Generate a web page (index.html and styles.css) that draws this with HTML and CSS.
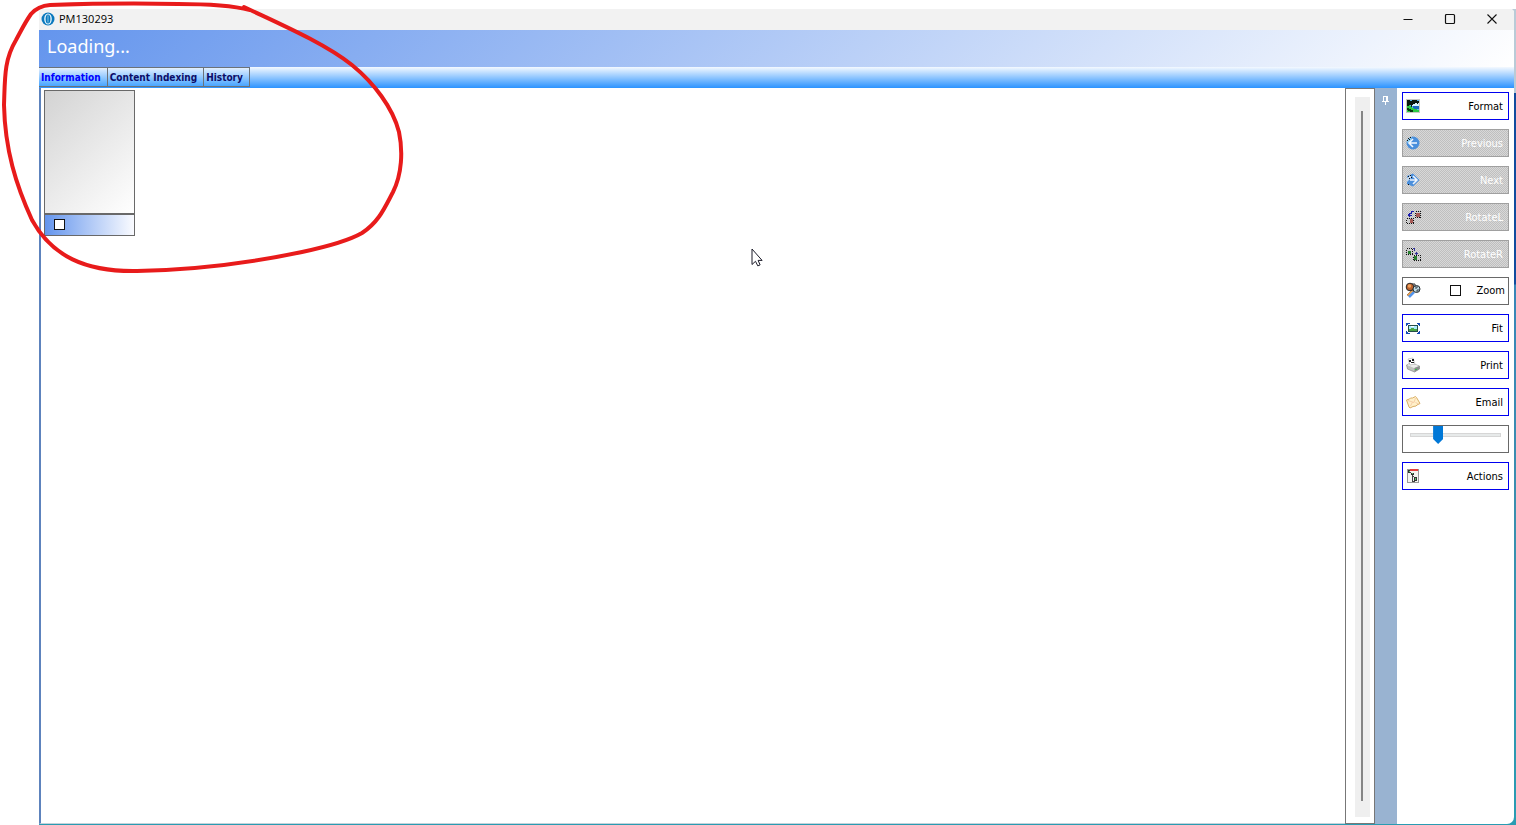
FILE: index.html
```
<!DOCTYPE html>
<html lang="en">
<head>
<meta charset="utf-8">
<title>PM130293</title>
<link rel="stylesheet" href="styles.css">
</head>
<body>
<div class="desktop">
<div class="window">
  <header class="titlebar">
    <svg class="app-icon" viewBox="0 0 14 14"><circle cx="7" cy="7" r="6.500" fill="#0a78bd"/><ellipse cx="7" cy="7" rx="3.800" ry="5.500" fill="#e6f6fd"/><ellipse cx="7" cy="7" rx="2.400" ry="4.600" fill="#0a78bd"/><path d="M7 3.400v7.200" stroke="#7cc4e6" stroke-width="1"/></svg>
    <span class="title">PM130293</span>
    <div class="window-buttons">
      <button aria-label="Minimize"><svg viewBox="0 0 12 12"><path d="M1.500 6.500h9" stroke="#111"/></svg></button>
      <button aria-label="Maximize"><svg viewBox="0 0 12 12"><rect x="1.500" y="1.500" width="9" height="9" rx="1" fill="none" stroke="#111" stroke-width="1.200"/></svg></button>
      <button aria-label="Close"><svg viewBox="0 0 12 12"><path d="M1.500 1.500l9 9m0-9l-9 9" stroke="#111" stroke-width="1.100"/></svg></button>
    </div>
  </header>
  <h1 class="banner">Loading...</h1>
  <nav class="tabs">
    <button class="tab active">Information</button>
    <button class="tab">Content Indexing</button>
    <button class="tab">History</button>
  </nav>
  <div class="content">
    <main class="viewer">
      <div class="thumb">
        <div class="page"></div>
        <label class="thumb-foot"><input type="checkbox" class="check" aria-label="Select page"></label>
      </div>
    </main>
    <div class="scroll-strip"><div class="scroll-track"><div class="scroll-line"></div></div></div>
    <div class="dock">
      <svg class="pin" viewBox="0 0 8 10" shape-rendering="crispEdges"><path d="M1 0h5v5h1v1H4v3H3V6H0V5h1z" fill="#fff"/><path d="M2 1h2v4H2z" fill="#99b3d1"/></svg>
    </div>
    <aside class="tools">
      <button class="tool">
        <svg class="icon" viewBox="0 0 16 16" shape-rendering="crispEdges"><path d="M1 1h14v14H1z" fill="#c9c9c4"/><path d="M2 2h12v12H2z" fill="#55b7e8"/><path d="M7 5h7v3H7z" fill="#d4f3ff"/><path d="M8 8h6v3H8z" fill="#1769bf"/><path d="M2 7h3v1h2v2h2v1h3v1h2v2H2z" fill="#2bc943"/><path d="M2 2h3v1h2V2h5v1h2v2h-1v1h-1V5h-2v1H8v1H7v2H6V7H4v1H2z" fill="#07180f"/><path d="M2 10h2v1h2v1h2v2H5v-1H3v-1H2z" fill="#073b12"/></svg>
        <span>Format</span></button>
      <button class="tool" disabled>
        <svg class="icon" viewBox="0 0 16 16"><circle cx="8" cy="8" r="6.500" fill="#4a8fdc"/><path d="M2 7a6 6 0 0 1 5-5l-1 3-3 3z" fill="#8ccdf0"/><path d="M8 4L4 8l4 4M4 8h8" fill="none" stroke="#f2f8ff" stroke-width="1.600"/><path d="M3 3h1v1H3zM5 2h1v1H5zM2 5h1v1H2zM4 4h1v1H4z" fill="#111"/></svg>
        <span>Previous</span></button>
      <button class="tool" disabled>
        <svg class="icon" viewBox="0 0 16 16"><path d="M8 1.500l6.500 6.500L8 14.500 2 12V4z" fill="#4a8fdc"/><path d="M1 7l5-5v4l-4 4z" fill="#c5d9ed"/><path d="M8 4l4 4-4 4M12 8H5" fill="none" stroke="#eef4fc" stroke-width="1.600"/><path d="M3 4h1v1H3zM5 3h1v1H5zM4 6h1v1H4zM6 5h1v1H6zM3 12h1v1H3z" fill="#111"/></svg>
        <span>Next</span></button>
      <button class="tool" disabled>
        <svg class="icon" viewBox="0 0 16 16" shape-rendering="crispEdges"><path d="M10.500 2.500h5v6h-5zM1.500 9.500h7v5h-7z" fill="#ccc" stroke="#111" stroke-dasharray="1 1"/><path d="M11 4h4v4h-4zM5 10h3v4H5z" fill="#a85a56"/><path d="M8.500 2.500h-2v2h-2v3M3 6.500h4M3 5.500h1" fill="none" stroke="#1c1cad"/></svg>
        <span>RotateL</span></button>
      <button class="tool" disabled>
        <svg class="icon" viewBox="0 0 16 16" shape-rendering="crispEdges"><path d="M1.500 2.500h6v6h-6zM8.500 9.500h7v5h-7z" fill="#ccc" stroke="#111" stroke-dasharray="1 1"/><path d="M3 5h3v3H3zM9 10h3v4H9z" fill="#28802e"/><path d="M8 2.500h1v2M10 7.500h3M11.500 6v3" fill="none" stroke="#30309b"/></svg>
        <span>RotateR</span></button>
      <label class="tool framed">
        <svg class="icon" viewBox="0 0 16 16"><path d="M2 13l5-5 2 2-5 4z" fill="#f4a443" stroke="#885325" stroke-width=".6"/><path d="M4 15l5-5" stroke="#5394ec" stroke-width="2.500"/><circle cx="5" cy="5" r="3.800" fill="#bd632c" stroke="#272727"/><circle cx="4.500" cy="4" r="1.700" fill="#f0a25d"/><circle cx="11.500" cy="7" r="3.500" fill="#c0dce5" stroke="#252d31"/><path d="M10 6h2V4M12 10V8h3" stroke="#38434c" fill="none"/><path d="M7 2h3v3" stroke="#333" fill="none"/></svg>
        <input type="checkbox" class="check zoom-check"><span>Zoom</span></label>
      <button class="tool">
        <svg class="icon" viewBox="0 0 16 16" shape-rendering="crispEdges"><path d="M1 3h4v1H3v1H2v1H1zM12 3h3v3h-1V5h-1V4h-1zM1 11h1v1h1v1h2v1H1zM14 11h1v3h-3v-1h1v-1h1z" fill="#164bb6"/><path d="M3 5h10v7H3z" fill="#274d4a"/><path d="M4 6h8v3H4z" fill="#a9eafe"/><path d="M4 9h2V8h3v1h3v2H4z" fill="#49a544"/><path d="M6 6h3v1H6z" fill="#fff"/></svg>
        <span>Fit</span></button>
      <button class="tool">
        <svg class="icon" viewBox="0 0 16 16"><path d="M1.500 8l4-2 9 3v3l-5 3-7-3z" fill="#bfc2bc" stroke="#888" stroke-width=".7"/><path d="M2 8l7 3 5-2-8-3z" fill="#ededeb"/><path d="M9.500 11v4l5-3V9z" fill="#8b908b"/><path d="M3 2l5-1 2 6-5 1z" fill="#fff" stroke="#999" stroke-width=".5"/><path d="M4 3h2v2H4zM7 2h2v2H7zM6 5h3v1H6z" fill="#222"/><path d="M10 12h2v1h-2z" fill="#42b94d"/></svg>
        <span>Print</span></button>
      <button class="tool">
        <svg class="icon" viewBox="0 0 16 16"><path d="M1.500 6l3-1 1-1 2 0 3-1.500 1 1 3.500 6-3 1.500-1 1-3 .5-3 1.500-1-1z" fill="#fff0c9" stroke="#d9ae65"/><path d="M3 6.500l6 2 1.500-4.500M5.500 12l2-4m3 .5l3 1.500" fill="none" stroke="#f2c5a0" stroke-width=".8"/></svg>
        <span>Email</span></button>
      <div class="tool framed slider-box"><input type="range" class="slider" min="0" max="100" value="28" aria-label="Thumbnail size"></div>
      <button class="tool">
        <svg class="icon" viewBox="0 0 16 16" shape-rendering="crispEdges"><path d="M2 1h12v14H2z" fill="#999"/><path d="M3 3h10v11H3z" fill="#f4f4f0"/><path d="M5 1h8v2H5z" fill="#e33e3b"/><path d="M3 2h2v3H3zM6 5h3v2H6zM9 9h3v4H9z" fill="#333"/><path d="M4 3h1v1H4zM7 5h1v1H7zM10 10h1v2h-1z" fill="#58c768"/><path d="M7 7h1v6h2v1H7zM5 4h1v1H5zM8 8h1v1H8z" fill="#444"/></svg>
        <span>Actions</span></button>
    </aside>
  </div>
</div>
</div>
<svg class="annotation" viewBox="0 0 410 280" fill="none" stroke="#e81b1b" stroke-width="4" stroke-linecap="round" stroke-linejoin="round"><path d="M250 10C230 5 205 4 178 4C130 3 80 4 50 5Q38 6 31 14C24 24 21 31 16 40C4 60 5 78 4 105C5 150 16 185 32 220C52 256 85 272 137 271C190 270 245 264 302 252C330 246 348 241 362 233C379 222 385 207 393 192C402 174 403 151 399 132C393 108 374 83 352 65C324 43 282 25 244 7"/></svg>
<svg class="cursor" viewBox="0 0 12 19"><path d="M1 1v15.500l3.500-3.200 2.300 4.600 2.300-1-2-4.500h4z" fill="#fff" stroke="#1b1b29"/></svg>
</body>
</html>
```
FILE: styles.css
```
* { box-sizing: border-box; }
body {
  margin: 0;
  padding: 9px 0 0 39px;
  height: 100vh;
  background: #fff;
  color: #000;
  font: 11px "DejaVu Sans Condensed", "DejaVu Sans", sans-serif;
  overflow: hidden;
}
button { font: inherit; color: inherit; margin: 0; padding: 0; border: 0; background: none; }
svg { display: block; }
.desktop {
  height: 100%;
  padding: 0 2px 1px 0;
  background: linear-gradient(#b9cbd7 0 84px, #124c9e 84px 275px, #3986b8 276px, #3b8eae 60%, #299cb2);
}
.window {
  height: 100%;
  display: flex;
  flex-direction: column;
  border-radius: 0 4px 7px 0;
  overflow: hidden;
  background: #fff;
}
.titlebar {
  height: 21px;
  flex: none;
  display: flex;
  align-items: center;
  padding: 0 1px 2px 2px;
  background: #f2f2f2;
}
.app-icon { width: 14px; height: 14px; }
.title { margin-left: 4px; font: 11px "Open Sans", sans-serif; }
.window-buttons { margin-left: auto; display: flex; }
.window-buttons button { width: 42px; display: flex; justify-content: center; }
.window-buttons svg { width: 12px; height: 12px; }
.banner {
  height: 37px;
  flex: none;
  margin: 0;
  padding-left: 8px;
  color: #fff;
  background: linear-gradient(135deg, #6495ed, #fff);
  font: 18px/32px "Noto Sans", sans-serif;
}
.tabs {
  height: 21px;
  flex: none;
  display: flex;
  background: linear-gradient(#f4f9ff, #2b93ff);
}
.tab {
  height: 20px;
  padding: 0 6px 0 2px;
  border: 1px solid #6c7278;
  border-left: 0;
  background: linear-gradient(#e2efff, #48a5ff);
  color: #0c0c68;
  font: bold 10px "DejaVu Sans Condensed", "DejaVu Sans", sans-serif;
}
.tab.active { color: #00f; }
.content { flex: 1; min-height: 0; display: flex; }
.viewer {
  flex: 1;
  padding: 2px;
  border-left: 2px solid #5d83bd;
  border-bottom: 1px solid #c4d2db;
}
.thumb { width: 91px; margin-left: 1px; border: 1px solid #696969; }
.page { height: 124px; background: linear-gradient(135deg, #d3d3d3, #fff); border-bottom: 2px solid #696969; }
.thumb-foot {
  height: 20px;
  display: flex;
  align-items: center;
  padding: 0 0 2px 9px;
  background: linear-gradient(to right, #6495ed, #fafbff);
}
.check {
  appearance: none;
  width: 11px;
  height: 11px;
  margin: 0;
  border: 1px solid #111;
  background: #fff;
}
.scroll-strip { width: 30px; padding: 8px 4px 6px 9px; border: 1px solid #777; display: flex; }
.scroll-track { width: 15px; padding: 14px 6px 16px; background: #efefef; display: flex; }
.scroll-line { width: 2px; background: #858585; }
.dock { width: 22px; padding: 8px 7px; background: #99b3d1; }
.pin { width: 8px; height: 10px; }
.tools { width: 117px; padding: 4px 5px; display: flex; flex-direction: column; gap: 9px; }
.tool {
  height: 28px;
  padding: 0 5px 0 2px;
  display: flex;
  align-items: center;
  border: 1px solid #0000f0;
  background: #fff;
}
.tool span { margin-left: auto; }
.tool:disabled {
  color: #fff;
  border-color: #a0a0a0;
  background: repeating-conic-gradient(#bfbfbf 0 25%, #d8d8d8 0 50%) 0 0 / 2px 2px;
}
.framed { border-color: #696969; padding: 0 3px 2px 2px; }
.icon { width: 16px; height: 16px; }
.zoom-check { margin-left: 29px; }
.slider-box { padding: 0 7px 8px; }
.slider { appearance: none; width: 100%; height: 18px; margin: 0; background: none; }
.slider::-webkit-slider-runnable-track { height: 4px; border: 1px solid #d6d6d6; background: #e7eaea; }
.slider::-webkit-slider-thumb {
  appearance: none;
  width: 10px;
  height: 18px;
  margin-top: -8px;
  background: #0078d7;
  clip-path: polygon(0 0, 100% 0, 100% 72%, 50% 100%, 0 72%);
}
.annotation { position: absolute; left: 0; top: 0; width: 410px; height: 280px; pointer-events: none; }
.cursor { position: absolute; left: 751px; top: 248px; width: 12px; height: 19px; pointer-events: none; }
```
